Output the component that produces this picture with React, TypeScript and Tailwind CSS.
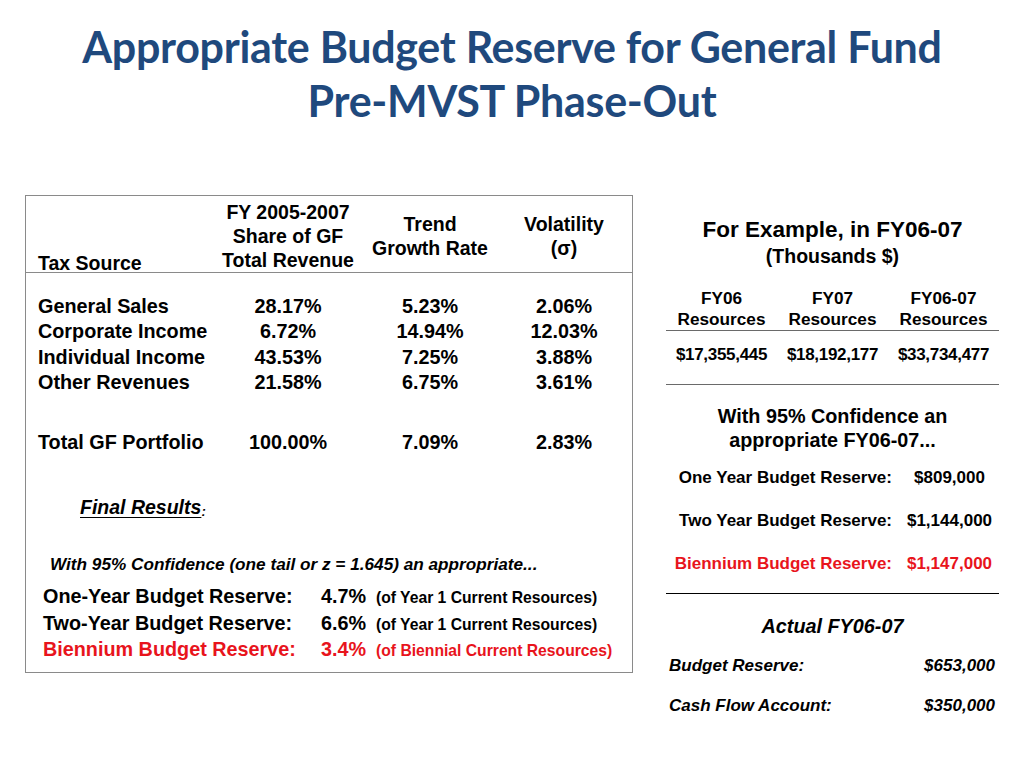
const rows = [
  ["General Sales", "28.17%", "5.23%", "2.06%"],
  ["Corporate Income", "6.72%", "14.94%", "12.03%"],
  ["Individual Income", "43.53%", "7.25%", "3.88%"],
  ["Other Revenues", "21.58%", "6.75%", "3.61%"],
];

const grid = "grid grid-cols-[190px_144px_140px_128px]";

const TaxTable = () => (
  <div className="w-[608px] h-[478px] border border-[#8a8a8a] flex flex-col">
    {/* header */}
    <div className={`${grid} h-[77px] items-end border-b border-[#8a8a8a] text-[19.5px] font-bold leading-[24px] text-center`}>
      <div className="text-left pl-[12px] text-[19.5px] translate-y-[3px]">Tax Source</div>
      <div className="whitespace-nowrap">
        FY 2005-2007
        <br />
        Share of GF
        <br />
        Total Revenue
      </div>
      <div className="pb-[12px] whitespace-nowrap">
        Trend
        <br />
        Growth Rate
      </div>
      <div className="pb-[12px]">
        Volatility
        <br />
        (σ)
      </div>
    </div>

    {/* body */}
    <div className="pt-[21px] text-[19.8px] font-bold leading-[25.3px]">
      {rows.map((r) => (
        <div key={r[0]} className={`${grid} text-center`}>
          <div className="text-left pl-[12px] whitespace-nowrap">{r[0]}</div>
          <div>{r[1]}</div>
          <div>{r[2]}</div>
          <div>{r[3]}</div>
        </div>
      ))}
      <div className={`${grid} text-center mt-[35px]`}>
        <div className="text-left pl-[12px] whitespace-nowrap">Total GF Portfolio</div>
        <div>100.00%</div>
        <div>7.09%</div>
        <div>2.83%</div>
      </div>
    </div>

    <div className="mt-[40px] pl-[54px] text-[19.5px] leading-[24px] font-bold italic">
      <span className="underline underline-offset-[3px]">Final Results</span>
      <span className="text-[13px] align-[-2px]">:</span>
    </div>

    <div className="mt-[30px] pl-[24px] text-[17.2px] leading-[20px] font-bold italic whitespace-nowrap">
      With 95% Confidence (one tail or z = 1.645) an appropriate...
    </div>

    <div className="mt-[10px] pl-[17px] font-bold leading-[24.5px]">
      {[
        ["One-Year Budget Reserve:", "4.7%", "(of Year 1 Current Resources)", "text-black"],
        ["Two-Year Budget Reserve:", "6.6%", "(of Year 1 Current Resources)", "text-black"],
        ["Biennium Budget Reserve:", "3.4%", "(of Biennial Current Resources)", "text-[#e8141c]"],
      ].map((r) => (
        <div key={r[0]} className={`flex items-baseline ${r[3]}`}>
          <div className="w-[278px] text-[19.8px] whitespace-nowrap">{r[0]}</div>
          <div className="w-[55px] text-[19.8px]">{r[1]}</div>
          <div className="text-[15.7px] whitespace-nowrap">{r[2]}</div>
        </div>
      ))}
    </div>
  </div>
);

const ExamplePanel = () => (
  <div className="w-[333px] flex flex-col font-bold text-center">
    <div className="mt-[22px] text-[22.5px] leading-[26px] whitespace-nowrap">For Example, in FY06-07</div>
    <div className="text-[19.5px] leading-[24px] mt-[1px]">(Thousands $)</div>

    <div className="mt-[20px] grid grid-cols-3 text-[17.2px] leading-[21px] border-b border-[#6a6a6a]">
      <div>
        FY06
        <br />
        Resources
      </div>
      <div>
        FY07
        <br />
        Resources
      </div>
      <div>
        FY06-07
        <br />
        Resources
      </div>
    </div>
    <div className="grid grid-cols-3 text-[17px] leading-[20px] pt-[14px] pb-[19px] border-b border-[#6a6a6a] tracking-[-0.3px] whitespace-nowrap">
      <div>$17,355,445</div>
      <div>$18,192,177</div>
      <div>$33,734,477</div>
    </div>

    <div className="mt-[19px] text-[19.8px] leading-[24px]">
      With 95% Confidence an
      <br />
      appropriate FY06-07...
    </div>

    <div className="mt-[16px] text-[17px] leading-[20px] flex flex-col gap-[23px]">
      {[
        ["One Year Budget Reserve:", "$809,000", "text-black"],
        ["Two Year Budget Reserve:", "$1,144,000", "text-black"],
        ["Biennium Budget Reserve:", "$1,147,000", "text-[#e8141c]"],
      ].map((r) => (
        <div key={r[0]} className={`flex ${r[2]}`}>
          <div className="w-[226px] text-right whitespace-nowrap">{r[0]}</div>
          <div className="flex-1 text-center pl-[8px] whitespace-nowrap">{r[1]}</div>
        </div>
      ))}
    </div>

    <div className="mt-[19px] border-b-[1.5px] border-black" />

    <div className="mt-[20px] text-[19.8px] leading-[24px] italic">Actual FY06-07</div>

    <div className="mt-[18px] text-[17px] leading-[20px] italic flex flex-col gap-[20px] pl-[3px] pr-[4px]">
      <div className="flex justify-between">
        <span>Budget Reserve:</span>
        <span>$653,000</span>
      </div>
      <div className="flex justify-between">
        <span>Cash Flow Account:</span>
        <span>$350,000</span>
      </div>
    </div>
  </div>
);

export default function App() {
  return (
    <div className="w-[1024px] h-[768px] bg-white text-black font-['Liberation_Sans',Arial,sans-serif] overflow-hidden">
      <h1 className="pt-[20px] text-center text-[#1f497d] font-['Lato',sans-serif] font-bold text-[43px] leading-[54px] tracking-[-0.3px]">
        Appropriate Budget Reserve for General Fund
        <br />
        Pre-MVST Phase-Out
      </h1>
      <div className="mt-[67px] flex pl-[25px] gap-[33px]">
        <TaxTable />
        <ExamplePanel />
      </div>
    </div>
  );
}
